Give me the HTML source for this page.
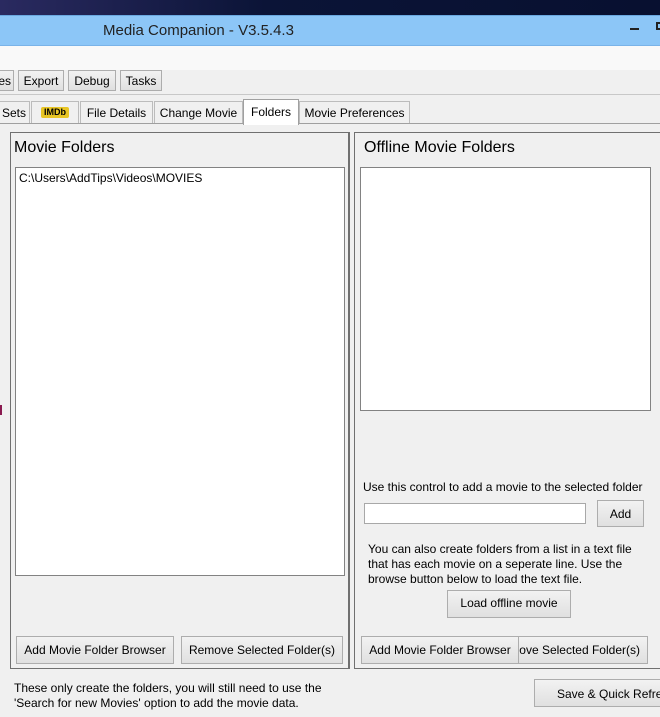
<!DOCTYPE html>
<html><head><style>
*{box-sizing:border-box;margin:0;padding:0}
body{width:660px;height:717px;overflow:hidden;background:#f0f0f0;font-family:"Liberation Sans",sans-serif;font-size:12px;color:#000;position:relative}
.a{position:absolute}
.btn{position:absolute;background:linear-gradient(#f2f2f2,#e0e0e0);border:1px solid #adadad;font-size:12px;text-align:center;white-space:nowrap;overflow:hidden}
.tab{position:absolute;top:101px;height:22px;border:1px solid #bcbcbc;border-bottom:none;background:#f0f0f0;font-size:12px;line-height:23px;text-align:center;white-space:nowrap}
</style></head><body>
<div class="a" style="left:0;top:0;width:660px;height:15px;background:linear-gradient(90deg,#2a2a60,#0b1437 40%,#081030)"></div>
<div class="a" style="left:0;top:15px;width:660px;height:31px;background:#8cc6f7;border-top:1px solid #6aa8e0;border-bottom:1px solid #7ab3e8"></div>
<div class="a" style="left:103px;top:22px;font-size:15px;color:#222">Media Companion - V3.5.4.3</div>
<div class="a" style="left:630px;top:28px;width:9px;height:2px;background:#222"></div>
<div class="a" style="left:656px;top:22px;width:8px;height:8px;border:2px solid #222"></div>
<div class="a" style="left:0;top:46px;width:660px;height:24px;background:#f9f9f9"></div>
<div class="a" style="left:0;top:70px;width:660px;height:25px;background:#f0f0f0;border-bottom:1px solid #c8c8c8"></div>
<div class="btn" style="left:-6px;top:70px;width:20px;height:21px;line-height:20px;text-align:right;padding-right:2px">es</div>
<div class="btn" style="left:18px;top:70px;width:46px;height:21px;line-height:20px">Export</div>
<div class="btn" style="left:68px;top:70px;width:48px;height:21px;line-height:20px">Debug</div>
<div class="btn" style="left:120px;top:70px;width:42px;height:21px;line-height:20px">Tasks</div>
<div class="a" style="left:0;top:96px;width:660px;height:30px;background:#f0f0f0"></div>
<div class="a" style="left:0;top:123px;width:660px;height:1px;background:#a0a0a0"></div>
<div class="tab" style="left:-6px;width:36px;text-align:right;padding-right:3px">Sets</div>
<div class="tab" style="left:31px;width:48px"><span style="display:inline-block;background:#e8c524;border-radius:2px;font-size:9px;font-weight:bold;line-height:11px;padding:0 3px;margin-top:5px;vertical-align:top">IMDb</span></div>
<div class="tab" style="left:80px;width:73px">File Details</div>
<div class="tab" style="left:154px;width:89px">Change Movie</div>
<div class="tab" style="left:243px;top:99px;width:56px;height:26px;background:#fff;border-color:#a0a0a0;z-index:2;line-height:24px">Folders</div>
<div class="tab" style="left:299px;width:111px">Movie Preferences</div>
<div class="a" style="left:0;top:405px;width:2px;height:10px;background:#8a1a50"></div>
<div class="a" style="left:10px;top:132px;width:340px;height:537px;border:1px solid #707070;border-right:2px solid #707070"></div>
<div class="a" style="left:14px;top:139px;font-size:16px">Movie Folders</div>
<div class="a" style="left:15px;top:167px;width:330px;height:409px;background:#fff;border:1px solid #828282"></div>
<div class="a" style="left:19px;top:171px;font-size:12px">C:\Users\AddTips\Videos\MOVIES</div>
<div class="btn" style="left:16px;top:636px;width:158px;height:28px;line-height:27px">Add Movie Folder Browser</div>
<div class="btn" style="left:181px;top:636px;width:162px;height:28px;line-height:27px">Remove Selected Folder(s)</div>
<div class="a" style="left:354px;top:132px;width:310px;height:537px;border:1px solid #707070"></div>
<div class="a" style="left:364px;top:139px;font-size:16px">Offline Movie Folders</div>
<div class="a" style="left:360px;top:167px;width:291px;height:244px;background:#fff;border:1px solid #828282"></div>
<div class="a" style="left:363px;top:480px;font-size:12px">Use this control to add a movie to the selected folder</div>
<div class="a" style="left:364px;top:503px;width:222px;height:21px;background:#fff;border:1px solid #a8a8a8"></div>
<div class="btn" style="left:597px;top:500px;width:47px;height:27px;line-height:27px">Add</div>
<div class="a" style="left:368px;top:542px;font-size:12px;line-height:15px">You can also create folders from a list in a text file<br>that has each movie on a seperate line. Use the<br>browse button below to load the text file.</div>
<div class="btn" style="left:447px;top:590px;width:124px;height:28px;line-height:24px">Load offline movie</div>
<div class="btn" style="left:501px;top:636px;width:147px;height:28px;line-height:27px;text-align:right;padding-right:7px">ove Selected Folder(s)</div>
<div class="btn" style="left:361px;top:636px;width:158px;height:28px;line-height:27px;z-index:2">Add Movie Folder Browser</div>
<div class="a" style="left:14px;top:681px;font-size:12px;line-height:15px">These only create the folders, you will still need to use the<br>'Search for new Movies' option to add the movie data.</div>
<div class="btn" style="left:534px;top:679px;width:140px;height:28px;line-height:28px;text-align:left;padding-left:22px">Save &amp; Quick Refresh</div>
</body></html>
